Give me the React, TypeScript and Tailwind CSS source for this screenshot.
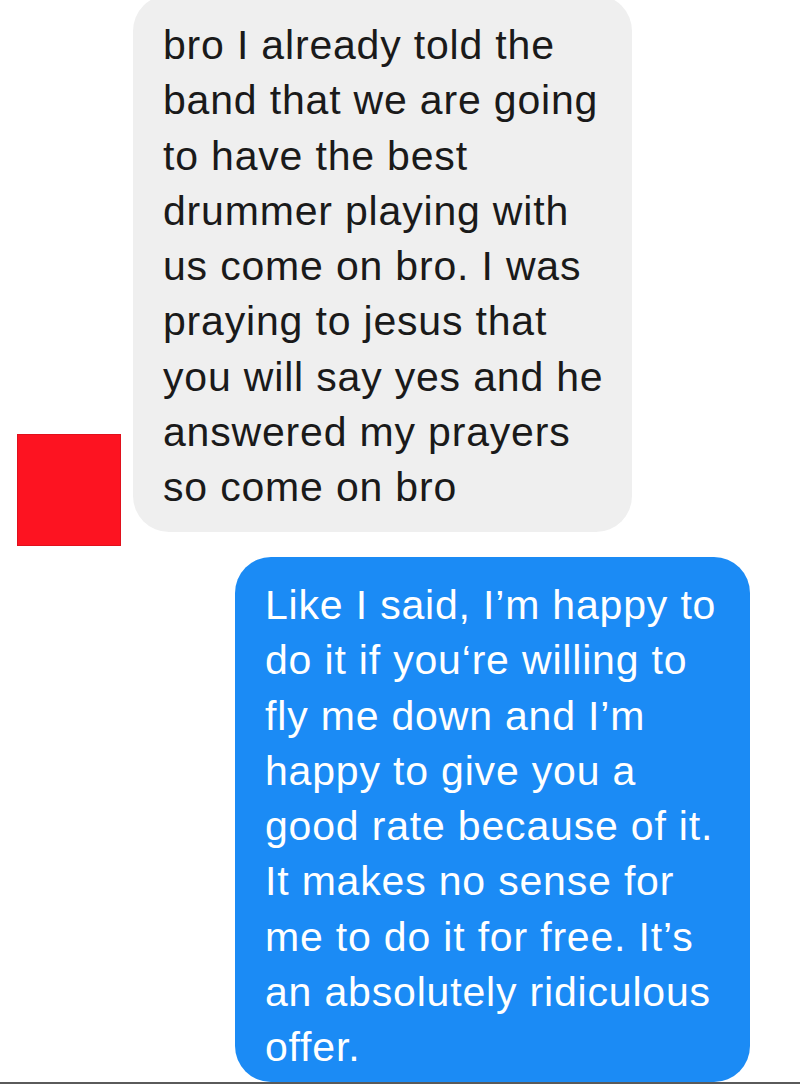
export default function App() {
  const theirLines = [
    "bro I already told the",
    "band that we are going",
    "to have the best",
    "drummer playing with",
    "us come on bro. I was",
    "praying to jesus that",
    "you will say yes and he",
    "answered my prayers",
    "so come on bro",
  ];

  const myLines = [
    "Like I said, I\u2019m happy to",
    "do it if you\u2018re willing to",
    "fly me down and I\u2019m",
    "happy to give you a",
    "good rate because of it.",
    "It makes no sense for",
    "me to do it for free. It\u2019s",
    "an absolutely ridiculous",
    "offer.",
  ];

  return (
    <div className="w-[800px] h-[1084px] bg-white overflow-hidden flex flex-col font-['Liberation_Sans',Arial,sans-serif] text-[41px] leading-[55.3px] tracking-[0.02em]">
      {/* incoming message */}
      <div className="flex items-end mt-[-5px]">
        <div className="ml-[17px] mb-[-14px] w-[104px] h-[112px] shrink-0 bg-[#fd1321] border border-[#e0101c]" />
        <div className="ml-[12px] w-[499px] h-[537px] rounded-[36px] bg-[#efefef] pl-[30px] pt-[23px] text-[#1a1a1a]">
          {theirLines.map((l, i) => (
            <div key={i} className="whitespace-nowrap">
              {l}
            </div>
          ))}
        </div>
      </div>

      {/* outgoing message */}
      <div className="flex justify-end pr-[50px] mt-[25px] flex-1 min-h-0">
        <div className="w-[515px] h-[525px] rounded-[36px] bg-[#1b8bf5] pl-[30px] pt-[21px] text-white">
          {myLines.map((l, i) => (
            <div key={i} className="whitespace-nowrap">
              {l}
            </div>
          ))}
        </div>
      </div>
      <div className="h-[2px] bg-[#5a5a5a] shrink-0" />
    </div>
  );
}
